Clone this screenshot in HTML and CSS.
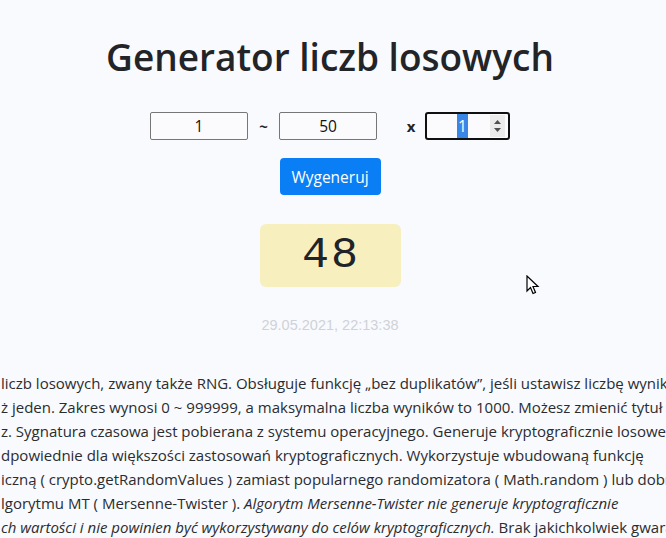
FILE: index.html
```html
<!DOCTYPE html>
<html lang="pl">
<head>
    <meta charset="utf-8">
    <title>Generator liczb losowych</title>
    <link rel="stylesheet" href="styles.css">
</head>
<body>

<div class="page">
    <h1 class="title">Generator liczb losowych</h1>

    <div class="range">
        <input class="field" type="text" value="1">
        <span class="sep">~</span>
        <input class="field" type="text" value="50">
        <span class="sep times">x</span>
        <div class="field count">
            <span class="count-value"><span class="sel">1</span></span>
            <span class="spin">
                <svg width="9" height="16" viewBox="0 0 9 16">
                    <path d="M1 6 L4.5 2 L8 6 Z" fill="#505050"/>
                    <path d="M1 10 L4.5 14 L8 10 Z" fill="#505050"/>
                </svg>
            </span>
        </div>
    </div>

    <div class="actions">
        <button class="btn" type="button">Wygeneruj</button>
    </div>

    <div class="result">48</div>
    <div class="stamp">29.05.2021, 22:13:38</div>
</div>

<div class="about">
    <span class="line">liczb losowych, zwany także RNG. Obsługuje funkcję „bez duplikatów”, jeśli ustawisz liczbę wyników</span>
    <span class="line">ż jeden. Zakres wynosi 0 ~ 999999, a maksymalna liczba wyników to 1000. Możesz zmienić tytuł</span>
    <span class="line">z. Sygnatura czasowa jest pobierana z systemu operacyjnego. Generuje kryptograficznie losowe</span>
    <span class="line">dpowiednie dla większości zastosowań kryptograficznych. Wykorzystuje wbudowaną funkcję</span>
    <span class="line">iczną ( crypto.getRandomValues ) zamiast popularnego randomizatora ( Math.random ) lub dobrego</span>
    <span class="line">lgorytmu MT ( Mersenne-Twister ). <i>Algorytm Mersenne-Twister nie generuje kryptograficznie</i></span>
    <span class="line"><i>ch wartości i nie powinien być wykorzystywany do celów kryptograficznych.</i> Brak jakichkolwiek gwarancji</span>
</div>

<svg class="cursor" width="14" height="22" viewBox="0 0 14 22">
    <path d="M1 1 L1 16 L4.5 12.5 L7 18.5 L9.5 17.5 L7 11.5 L12 11.5 Z" fill="#fff" stroke="#000" stroke-width="1.2" stroke-linejoin="miter"/>
</svg>

</body>
</html>
```

FILE: styles.css
```css
* {
    box-sizing: border-box;
}

body {
    margin: 0;
    background-color: #f9fafd;
    color: #212529;
    font-family: 'Open Sans', 'Noto Sans', sans-serif;
    overflow: hidden;
    height: 538px;
    position: relative;
}

.page {
    padding-right: 6px;
    text-align: center;
}

.title {
    margin: 0;
    padding-top: 31px;
    font-size: 37px;
    font-weight: 600;
    line-height: 52px;
    color: #222428;
}

.range {
    display: flex;
    justify-content: center;
    align-items: center;
    margin-top: 29px;
}

.field {
    width: 98px;
    height: 28px;
    border: 1px solid #767676;
    border-radius: 2px;
    background: #fbfbfe;
    font-family: 'Open Sans', sans-serif;
    font-size: 15.5px;
    color: #111;
    text-align: center;
    padding: 0;
}

.sep {
    width: 31px;
    font-weight: 700;
    font-size: 15px;
}

.times {
    width: 48px;
    padding-left: 20px;
}

.count {
    width: 85px;
    border: 2px solid #101010;
    border-radius: 3px;
    display: flex;
    align-items: center;
    padding: 0 3px 0 0;
}

.count-value {
    flex: 1;
    text-align: center;
    padding-left: 8px;
}

.sel {
    background: #3a86e6;
    color: #fff;
    padding: 1px 1px;
    line-height: 22px;
    display: inline-block;
}

.spin {
    width: 15px;
    height: 22px;
    background: #ebebeb;
    display: flex;
    align-items: center;
    justify-content: center;
}

.actions {
    margin-top: 18px;
}

.btn {
    background-color: #0a7ef5;
    color: #fff;
    border: 0;
    border-radius: 4px;
    width: 101px;
    height: 37px;
    font-family: 'Open Sans', sans-serif;
    font-size: 15.5px;
}

.result {
    margin: 29px auto 0;
    width: 141px;
    height: 63px;
    background-color: #f8efbe;
    border-radius: 6px;
    font-family: 'Liberation Mono', monospace;
    font-size: 45px;
    letter-spacing: 2px;
    padding-left: 2px;
    line-height: 63px;
    color: #20232a;
}

.stamp {
    margin-top: 30px;
    font-family: 'Liberation Sans', sans-serif;
    font-size: 14.5px;
    color: #cfd2d8;
}

.about {
    margin-top: 38px;
    font-size: 15px;
    line-height: 24px;
    color: #2a2c30;
}

.line {
    display: block;
    white-space: nowrap;
    padding-left: 1px;
}

.cursor {
    position: absolute;
    left: 526px;
    top: 275px;
}
```
